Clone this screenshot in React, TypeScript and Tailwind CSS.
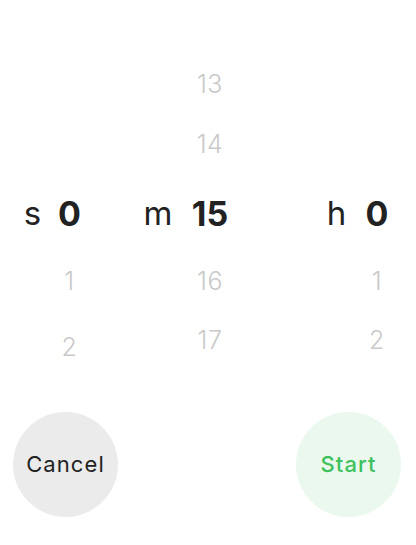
import React from "react";

type Cell = { text: string; extra?: string } | null;

type WheelProps = {
    label: string;
    cells: Cell[];
    labelClass: string;
    numClass: string;
};

// row heights of the picker: 13 / 14 / 15 / 16 / 17
const rows = ["h-[60px]", "h-[61px]", "h-[77px]", "h-[59px]", "h-[58px]"];

function Wheel({ label, cells, labelClass, numClass }: WheelProps) {
    return (
        <div className="flex">
            <div className={`flex flex-col ${labelClass}`}>
                {rows.map((h, i) => (
                    <div key={i} className={`${h} flex items-center justify-center`}>
                        {i === 2 && (
                            <span className="text-[33px] font-normal leading-none text-[#222222]">{label}</span>
                        )}
                    </div>
                ))}
            </div>
            <div className={`flex flex-col ${numClass}`}>
                {rows.map((h, i) => {
                    const cell = cells[i];
                    return (
                        <div key={i} className={`${h} flex items-center justify-center`}>
                            {cell && i === 2 && (
                                <span className="text-[34px] font-bold leading-none text-[#222222]">{cell.text}</span>
                            )}
                            {cell && i !== 2 && (
                                <span className={`text-[25px] font-light leading-none tracking-[0.02em] text-[#c9c9c9] ${cell.extra ?? ""}`}>
                                    {cell.text}
                                </span>
                            )}
                        </div>
                    );
                })}
            </div>
        </div>
    );
}

export default function App() {
    return (
        <div
            className="w-[416px] h-[545px] bg-white overflow-hidden"
            style={{ fontFamily: "Inter, 'DejaVu Sans', sans-serif" }}
        >
            <div className="flex pt-[54px] pl-[16px]">
                <Wheel
                    label="s"
                    cells={[null, null, { text: "0" }, { text: "1" }, { text: "2", extra: "mt-[14px]" }]}
                    labelClass="w-[33px]"
                    numClass="w-[41px]"
                />
                <div className="ml-[50px]">
                    <Wheel
                        label="m"
                        cells={[{ text: "13" }, { text: "14" }, { text: "15" }, { text: "16" }, { text: "17" }]}
                        labelClass="w-[36px]"
                        numClass="w-[68px]"
                    />
                </div>
                <div className="ml-[76px]">
                    <Wheel
                        label="h"
                        cells={[null, null, { text: "0" }, { text: "1" }, { text: "2" }]}
                        labelClass="w-[33px]"
                        numClass="w-[48px]"
                    />
                </div>
            </div>

            <div className="flex justify-between pl-[13px] pr-[15px] mt-[43px]">
                <button className="w-[105px] h-[105px] rounded-full bg-[#ebebeb] flex items-center justify-center text-[22px] tracking-[0.05em] text-[#222222]">
                    Cancel
                </button>
                <button className="w-[105px] h-[105px] rounded-full bg-[#eaf8ee] flex items-center justify-center text-[22px] tracking-[0.05em] font-medium text-[#3cc15c]">
                    Start
                </button>
            </div>
        </div>
    );
}
